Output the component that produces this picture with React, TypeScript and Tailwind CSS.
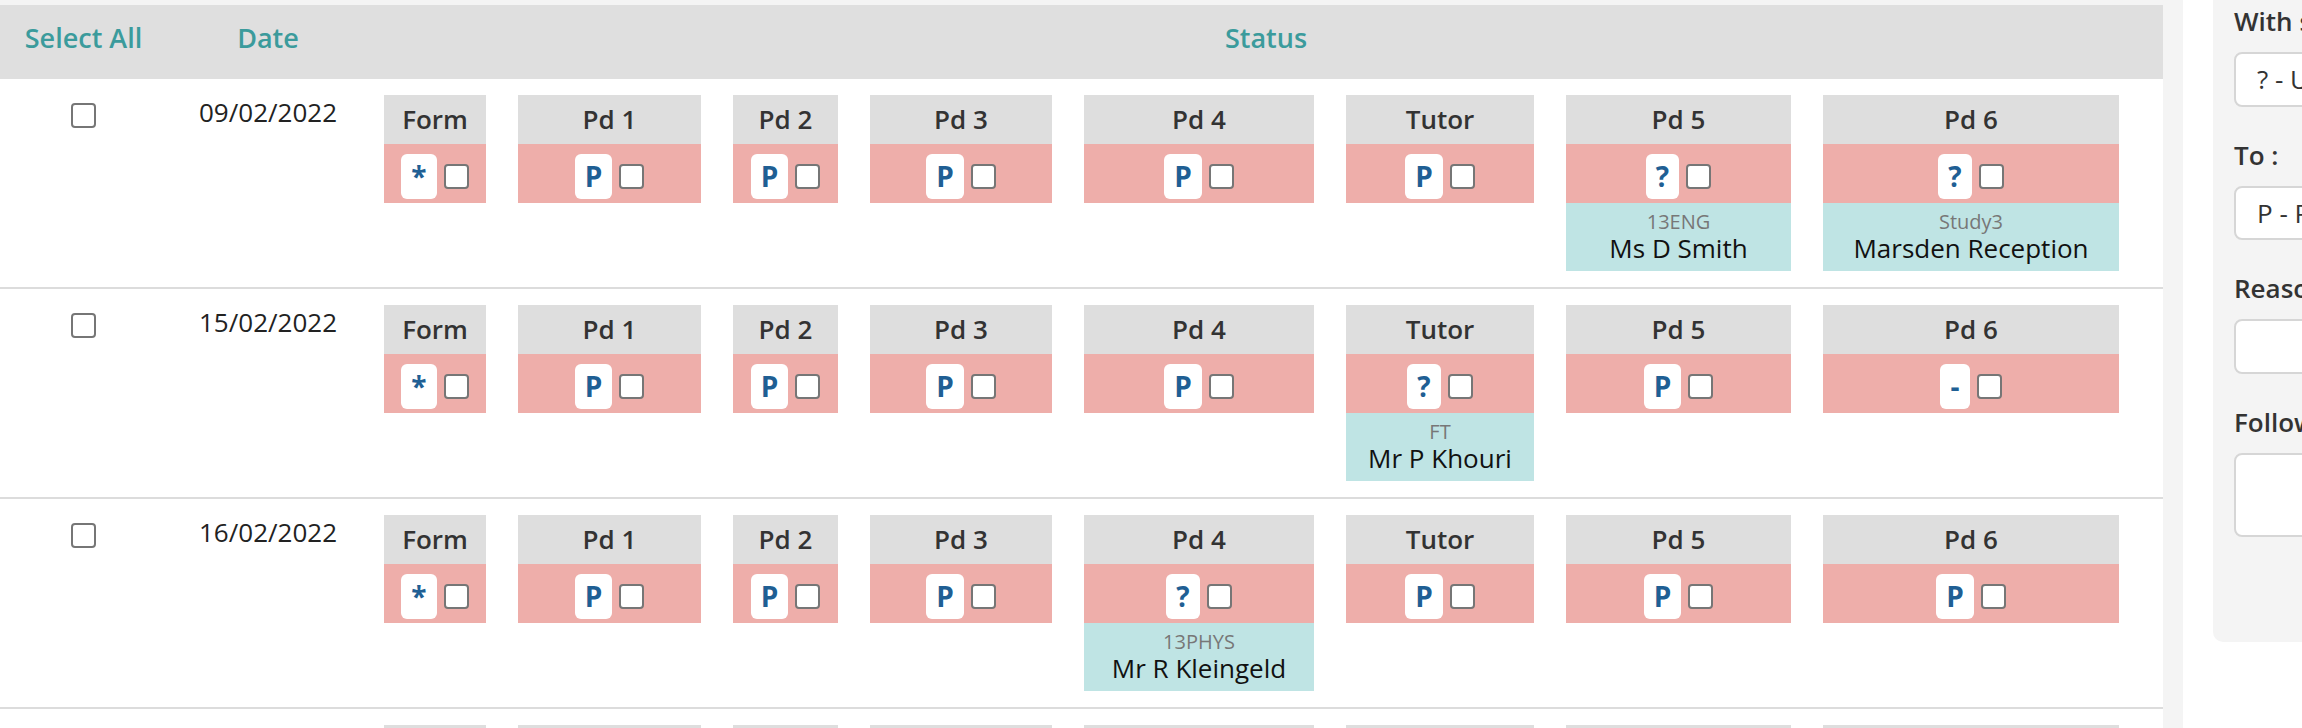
import React from "react";

type Mark = { code: string; group?: string; who?: string };

const periods = [
  { label: "Form", width: "w-[102px]" },
  { label: "Pd 1", width: "w-[183px]" },
  { label: "Pd 2", width: "w-[105px]" },
  { label: "Pd 3", width: "w-[182px]" },
  { label: "Pd 4", width: "w-[230px]" },
  { label: "Tutor", width: "w-[188px]" },
  { label: "Pd 5", width: "w-[225px]" },
  { label: "Pd 6", width: "w-[296px]" },
];

const rows: { date: string; marks: Mark[] }[] = [
  {
    date: "09/02/2022",
    marks: [
      { code: "*" },
      { code: "P" },
      { code: "P" },
      { code: "P" },
      { code: "P" },
      { code: "P" },
      { code: "?", group: "13ENG", who: "Ms D Smith" },
      { code: "?", group: "Study3", who: "Marsden Reception" },
    ],
  },
  {
    date: "15/02/2022",
    marks: [
      { code: "*" },
      { code: "P" },
      { code: "P" },
      { code: "P" },
      { code: "P" },
      { code: "?", group: "FT", who: "Mr P Khouri" },
      { code: "P" },
      { code: "-" },
    ],
  },
  {
    date: "16/02/2022",
    marks: [
      { code: "*" },
      { code: "P" },
      { code: "P" },
      { code: "P" },
      { code: "?", group: "13PHYS", who: "Mr R Kleingeld" },
      { code: "P" },
      { code: "P" },
      { code: "P" },
    ],
  },
  {
    date: "17/02/2022",
    marks: [
      { code: "*" },
      { code: "P" },
      { code: "P" },
      { code: "P" },
      { code: "P" },
      { code: "P" },
      { code: "P" },
      { code: "P" },
    ],
  },
];

function Checkbox() {
  return (
    <input
      type="checkbox"
      className="appearance-none block w-[25px] h-[25px] rounded-[4px] border-2 border-[#767676] bg-white"
    />
  );
}

function Period({ label, width, mark }: { label: string; width: string; mark: Mark }) {
  return (
    <div className={`${width} shrink-0 flex flex-col`}>
      <div className="h-[49px] bg-[#dedede] text-center text-[26px] leading-[49px] font-semibold text-[#333]">
        {label}
      </div>
      <div className="bg-[#eeaeaa] pt-[10px] pb-[4px] flex justify-center items-center gap-[7px]">
        <span className="h-[45px] px-[10px] rounded-[6px] bg-white text-[28px] leading-[45px] font-bold text-[#1f5f94]">
          {mark.code}
        </span>
        <Checkbox />
      </div>
      {mark.who && (
        <div className="bg-[#bfe4e4] pt-[8px] pb-[8px] text-center">
          <div className="text-[20px] leading-[22px] text-[#777]">{mark.group}</div>
          <div className="text-[26px] leading-[30px] text-[#111]">{mark.who}</div>
        </div>
      )}
    </div>
  );
}

function Field({ label, children, first }: { label: string; children: React.ReactNode; first?: boolean }) {
  return (
    <div className={first ? "" : "mt-[30px]"}>
      <div className="text-[26px] leading-[36px] font-semibold text-[#333] whitespace-nowrap">{label}</div>
      <div className="mt-[13px]">{children}</div>
    </div>
  );
}

export default function App() {
  return (
    <div className="flex w-[2302px] h-[728px] overflow-hidden bg-white font-['Open_Sans',sans-serif]">
      <main className="w-[2163px] shrink-0">
        <div className="h-[5px] bg-[#f4f4f4]" />
        <div className="h-[74px] bg-[#dfdfdf] flex pt-[15px] text-[27px] leading-[36px] font-semibold text-[#3b9b9c]">
          <div className="w-[167px] text-center">Select All</div>
          <div className="w-[202px] text-center">Date</div>
          <div className="flex-1 text-center">Status</div>
        </div>
        {rows.map((row) => (
          <div key={row.date} className="flex py-[16px] border-b-2 border-[#dcdcdc]">
            <div className="w-[167px] flex justify-center pt-[8px]">
              <Checkbox />
            </div>
            <div className="w-[202px] text-center text-[26px] leading-[35px] text-[#222]">{row.date}</div>
            <div className="flex-1 pl-[15px] flex items-start gap-[32px]">
              {periods.map((p, i) => (
                <Period key={p.label} label={p.label} width={p.width} mark={row.marks[i]} />
              ))}
            </div>
          </div>
        ))}
      </main>
      <div className="w-[20px] shrink-0 bg-[#f4f4f4]" />
      <aside className="w-[420px] shrink-0 pl-[30px]">
        <div className="-mt-[17px] pt-[20px] pb-[105px] pl-[21px] pr-[21px] rounded-[10px] bg-[#f4f4f4]">
          <Field label="With status :" first>
            <div className="h-[55px] rounded-[8px] border-2 border-[#d6d6d6] bg-white pl-[21px] text-[26px] leading-[51px] text-[#333] whitespace-nowrap">
              ? - Unexplained
            </div>
          </Field>
          <Field label="To :">
            <div className="h-[54px] rounded-[8px] border-2 border-[#d6d6d6] bg-white pl-[21px] text-[26px] leading-[50px] text-[#333] whitespace-nowrap">
              P - Present
            </div>
          </Field>
          <Field label="Reason :">
            <div className="h-[55px] rounded-[8px] border-2 border-[#d6d6d6] bg-white" />
          </Field>
          <Field label="Follow up :">
            <div className="h-[84px] rounded-[8px] border-2 border-[#d6d6d6] bg-white" />
          </Field>
        </div>
      </aside>
    </div>
  );
}
